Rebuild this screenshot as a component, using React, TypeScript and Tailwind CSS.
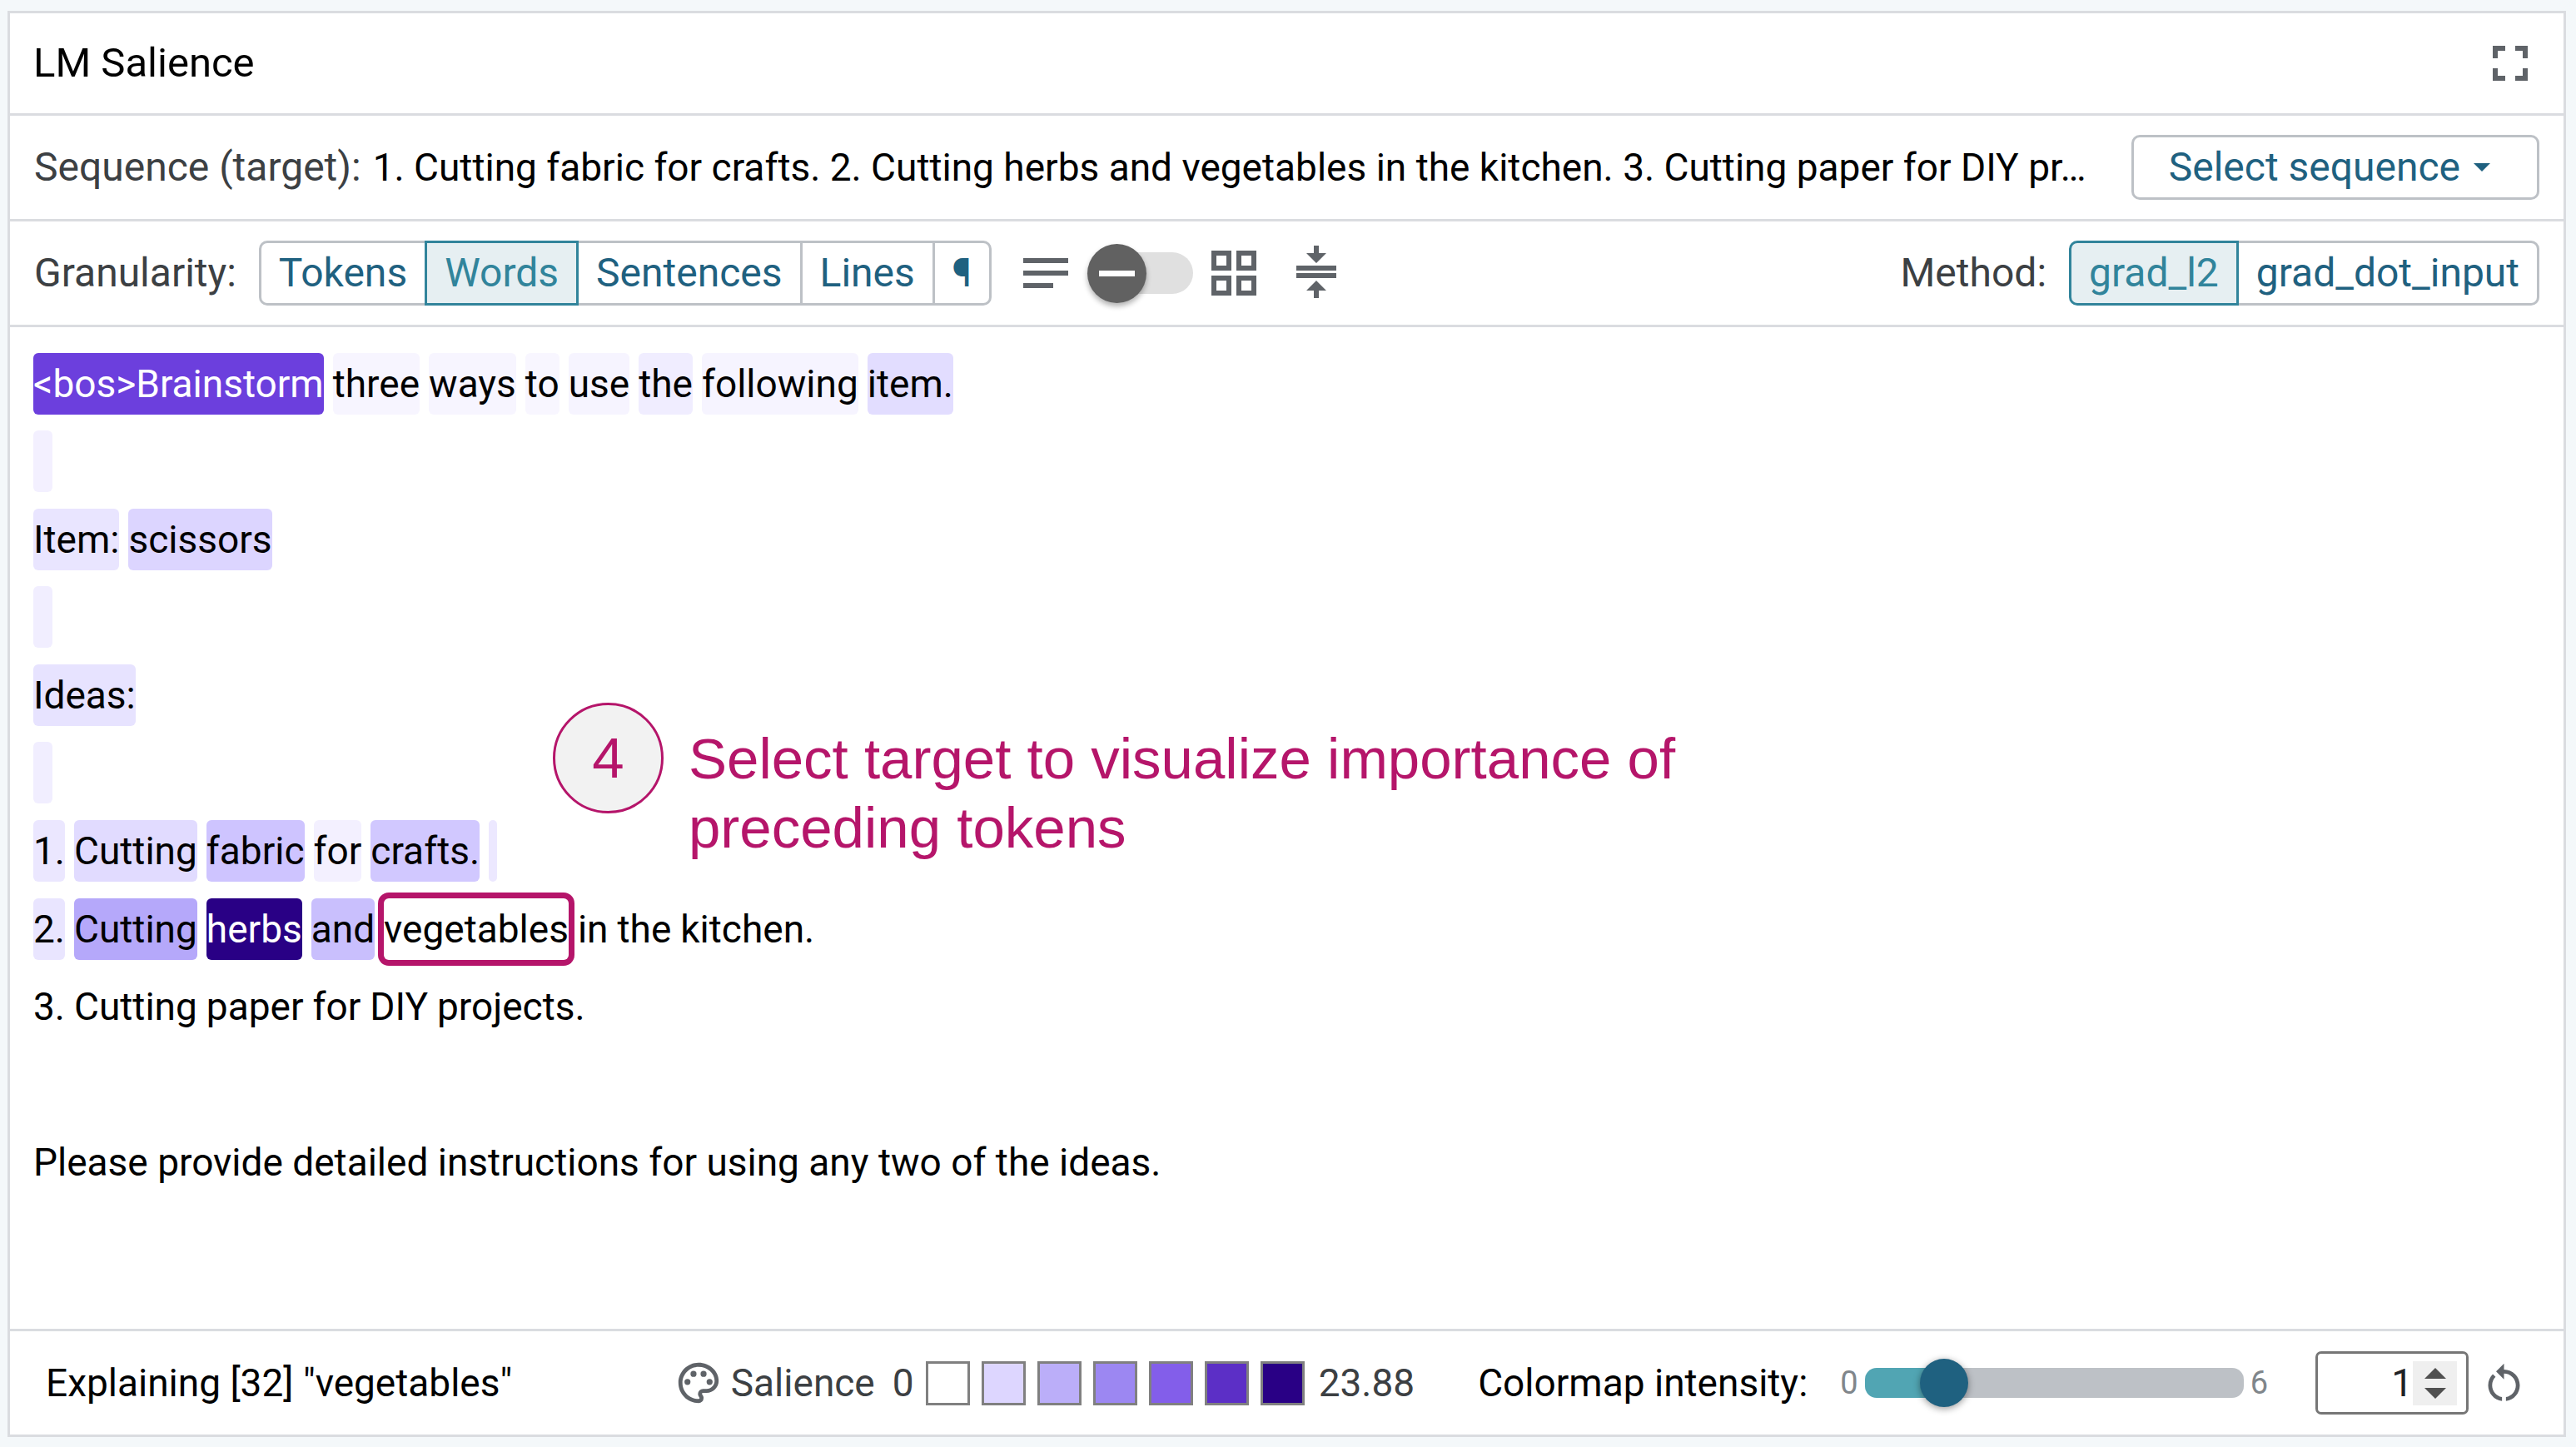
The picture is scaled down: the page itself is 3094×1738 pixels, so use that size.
import React, { useState } from "react";

type IconProps = { d: string; className: string };

function Icon({ d, className }: IconProps) {
  return (
    <svg viewBox="0 0 24 24" fill="currentColor" aria-hidden="true" className={className}>
      <path d={d} />
    </svg>
  );
}

const ICONS = {
  fullscreen: "M7 14H5v5h5v-2H7v-3zm-2-4h2V7h3V5H5v5zm12 7h-3v2h5v-5h-2v3zM14 5v2h3v3h2V5h-5z",
  notes: "M3 18h12v-2H3v2zM3 6v2h18V6H3zm0 7h18v-2H3v2z",
  grid: "M3 3v8h8V3H3zm6 6H5V5h4v4zm-6 4v8h8v-8H3zm6 6H5v-4h4v4zm4-16v8h8V3h-8zm6 6h-4V5h4v4zm-6 4v8h8v-8h-8zm6 6h-4v-4h4v4z",
  compress: "M8 19h3v3h2v-3h3l-4-4-4 4zm8-15h-3V1h-2v3H8l4 4 4-4zM4 9v2h16V9H4zM4 12h16v2H4z",
  palette:
    "M12 22C6.49 22 2 17.51 2 12S6.49 2 12 2s10 4.04 10 9c0 3.31-2.69 6-6 6h-1.77c-.28 0-.5.22-.5.5 0 .12.05.23.13.33.41.47.64 1.06.64 1.67A2.5 2.5 0 0 1 12 22zm0-18c-4.41 0-8 3.59-8 8s3.59 8 8 8c.28 0 .5-.22.5-.5a.54.54 0 0 0-.14-.35c-.41-.46-.63-1.05-.63-1.65a2.5 2.5 0 0 1 2.5-2.5H16c2.21 0 4-1.79 4-4 0-3.86-3.59-7-8-7zM6.5 10a1.5 1.5 0 1 0 0 3 1.5 1.5 0 1 0 0-3zM9.5 6a1.5 1.5 0 1 0 0 3 1.5 1.5 0 1 0 0-3zM14.5 6a1.5 1.5 0 1 0 0 3 1.5 1.5 0 1 0 0-3zM17.5 10a1.5 1.5 0 1 0 0 3 1.5 1.5 0 1 0 0-3z",
  restart:
    "M12 5V2L8 6l4 4V7c3.31 0 6 2.69 6 6 0 2.97-2.17 5.43-5 5.91v2.02c3.95-.49 7-3.85 7-7.93 0-4.42-3.58-8-8-8zm-6 8c0-1.65.67-3.15 1.76-4.24L6.34 7.34C4.9 8.79 4 10.79 4 13c0 4.08 3.05 7.44 7 7.93v-2.02c-2.83-.48-5-2.94-5-5.91z",
};

function ButtonGroup({ label, options, initial }: { label: string; options: string[]; initial: string }) {
  const [selected, setSelected] = useState(initial);
  return (
    <div className="flex items-center gap-[27px] text-[48px]">
      <span className="text-[#3c4043]">{label}</span>
      <div role="group" aria-label={label} className="flex">
        {options.map((option) => (
          <button
            key={option}
            type="button"
            aria-pressed={option === selected}
            onClick={() => setSelected(option)}
            className={
              "-ml-[3px] flex h-[78px] items-center border-[3px] px-[21px] first:ml-0 first:rounded-l-[10px] last:rounded-r-[10px] " +
              (option === selected
                ? "z-10 border-[#31849b] bg-[#e6eff2] text-[#31849b]"
                : "border-[#bdc1c6] bg-white text-[#1f6180]")
            }
          >
            {option}
          </button>
        ))}
      </div>
    </div>
  );
}

type Token = { text: string; className?: string };

const LINES: Token[][] = [
  [
    { text: "<bos>Brainstorm", className: "bg-[#6c3fdd] text-white" },
    { text: "three", className: "bg-[#f7f5ff]" },
    { text: "ways", className: "bg-[#f7f5ff]" },
    { text: "to", className: "bg-[#f8f6ff]" },
    { text: "use", className: "bg-[#f6f4ff]" },
    { text: "the", className: "bg-[#f0edff]" },
    { text: "following", className: "bg-[#f6f4ff]" },
    { text: "item.", className: "bg-[#e2ddff]" },
  ],
  [{ text: "", className: "w-[23px] bg-[#f3f0ff]" }],
  [
    { text: "Item:", className: "bg-[#e9e5ff]" },
    { text: "scissors", className: "bg-[#dcd5ff]" },
  ],
  [{ text: "", className: "w-[23px] bg-[#f1eeff]" }],
  [{ text: "Ideas:", className: "bg-[#e7e3ff]" }],
  [{ text: "", className: "w-[23px] bg-[#f1eeff]" }],
  [
    { text: "1.", className: "bg-[#ebe7ff]" },
    { text: "Cutting", className: "bg-[#e1dbff]" },
    { text: "fabric", className: "bg-[#cec4ff]" },
    { text: "for", className: "bg-[#f3f0ff]" },
    { text: "crafts.", className: "bg-[#d1c8ff]" },
    { text: "", className: "w-[10px] bg-[#ece8ff]" },
  ],
  [
    { text: "2.", className: "bg-[#e9e5ff]" },
    { text: "Cutting", className: "bg-[#b5a8fa]" },
    { text: "herbs", className: "bg-[#290085] text-white" },
    { text: "and", className: "bg-[#c9bffd]" },
    { text: "vegetables", className: "ring-[7px] ring-[#b5156a]" },
    { text: "in" },
    { text: "the" },
    { text: "kitchen." },
  ],
  [{ text: "3." }, { text: "Cutting" }, { text: "paper" }, { text: "for" }, { text: "DIY" }, { text: "projects." }],
  [],
  [{ text: "Please provide detailed instructions for using any two of the ideas." }],
];

const SWATCHES = [
  "bg-white",
  "bg-[#ddd6ff]",
  "bg-[#bbaef9]",
  "bg-[#9c87f2]",
  "bg-[#835eea]",
  "bg-[#5c2fc6]",
  "bg-[#290085]",
];

function Annotation() {
  return (
    <div className="absolute left-[652px] top-[451px] flex items-start gap-[30px] font-['Liberation_Sans',Arial,sans-serif] text-[69px] leading-[83px] text-[#b5156a]">
      <div className="flex size-[133px] shrink-0 items-center justify-center rounded-full border-[3px] border-[#b5156a] bg-[#f2f2f2]">
        4
      </div>
      <p className="pt-[26px]">
        Select target to visualize importance of
        <br />
        preceding tokens
      </p>
    </div>
  );
}

export default function App() {
  const [spread, setSpread] = useState(false);
  const [intensity, setIntensity] = useState(1);
  const fill = 4 + (intensity / 6) * 92;
  const step = (delta: number) => setIntensity((v) => Math.min(6, Math.max(0, v + delta)));

  return (
    <div className="flex min-h-screen flex-col bg-[#f4f8fa] pb-[12px] pl-[9px] pr-[12px] pt-[13px] font-[Roboto,sans-serif] text-[46px] leading-[56px] text-black">
      <main className="flex flex-1 flex-col border-[3px] border-[#dadce0] bg-white">
        <header className="flex h-[123px] items-center justify-between border-b-[3px] border-[#dadce0] pl-[28px] pr-[28px]">
          <h1 className="text-[49px]">LM Salience</h1>
          <button type="button" aria-label="Fullscreen" className="text-[#5f6368]">
            <Icon d={ICONS.fullscreen} className="size-[72px]" />
          </button>
        </header>

        <section className="flex h-[127px] items-center justify-between border-b-[3px] border-[#dadce0] px-[29px]">
          <div className="flex items-baseline gap-[14px] whitespace-nowrap">
            <span className="text-[48px] text-[#3c4043]">Sequence (target):</span>
            <span>
              1. Cutting fabric for crafts. 2. Cutting herbs and vegetables in the kitchen. 3. Cutting paper for DIY pr…
            </span>
          </div>
          <button
            type="button"
            className="flex h-[78px] shrink-0 items-center gap-[16px] rounded-[10px] border-[3px] border-[#bdc1c6] pl-[42px] pr-[56px] text-[48px] text-[#1f6180]"
          >
            Select sequence
            <svg viewBox="0 0 20 10" aria-hidden="true" className="h-[10px] w-[20px]" fill="currentColor">
              <path d="M0 0h20L10 10z" />
            </svg>
          </button>
        </section>

        <section className="flex h-[127px] items-center justify-between border-b-[3px] border-[#dadce0] px-[29px]">
          <div className="flex items-center text-[#5f6368]">
            <ButtonGroup
              label="Granularity:"
              options={["Tokens", "Words", "Sentences", "Lines", "¶"]}
              initial="Words"
            />
            <Icon d={ICONS.notes} className="ml-[29px] size-[72px]" />
            <label className="relative ml-[14px] flex h-[72px] w-[127px] cursor-pointer items-center">
              <input
                type="checkbox"
                role="switch"
                aria-label="Token spacing"
                checked={spread}
                onChange={(e) => setSpread(e.target.checked)}
                className="peer sr-only"
              />
              <span className="ml-[16px] h-[50px] flex-1 rounded-full bg-[#e0e0e0]" />
              <span className="absolute left-0 flex size-[71px] items-center justify-center rounded-full bg-[#616161] shadow-[0_4px_6px_rgba(0,0,0,0.3)] peer-checked:left-[56px]">
                <span className="h-[7px] w-[43px] bg-white" />
              </span>
            </label>
            <Icon d={ICONS.grid} className="ml-[13px] size-[72px]" />
            <button type="button" aria-label="Compress lines" className="ml-[27px]">
              <Icon d={ICONS.compress} className="size-[72px]" />
            </button>
          </div>
          <ButtonGroup label="Method:" options={["grad_l2", "grad_dot_input"]} initial="grad_l2" />
        </section>

        <section className="relative grid flex-1 auto-rows-fr px-[28px] pb-[153px] pt-[21px]">
          {LINES.map((line, i) => (
            <div key={i} className="flex items-center gap-[11px]">
              {line.map((token, j) => (
                <span
                  key={j}
                  className={"flex h-[74px] items-center whitespace-nowrap rounded-[6px] " + (token.className ?? "")}
                >
                  {token.text}
                </span>
              ))}
            </div>
          ))}
          <Annotation />
        </section>

        <footer className="flex h-[127px] items-center border-t-[3px] border-[#dadce0] px-[43px]">
          <span className="flex-1">Explaining [32] "vegetables"</span>
          <div className="mr-[76px] flex items-center text-[#3c4043]">
            <Icon d={ICONS.palette} className="size-[58px] text-[#5f6368]" />
            <span className="ml-[10px]">Salience</span>
            <span className="ml-[21px]">0</span>
            <div className="ml-[14px] mr-[17px] flex gap-[14px]">
              {SWATCHES.map((c) => (
                <span key={c} className={"size-[53px] border-[3px] border-[#808080] " + c} />
              ))}
            </div>
            <span>23.88</span>
          </div>
          <label htmlFor="intensity">Colormap intensity:</label>
          <div className="ml-[39px] flex items-center gap-[8px] text-[38px] text-[#80868b]">
            <span>0</span>
            <input
              id="intensity"
              type="range"
              min={0}
              max={6}
              step={1}
              value={intensity}
              onChange={(e) => setIntensity(Number(e.target.value))}
              style={{ backgroundImage: `linear-gradient(to right, #51a5b3 ${fill}%, #bdc1c6 ${fill}%)` }}
              className="h-[36px] w-[455px] appearance-none rounded-[14px] [&::-webkit-slider-thumb]:size-[58px] [&::-webkit-slider-thumb]:appearance-none [&::-webkit-slider-thumb]:rounded-full [&::-webkit-slider-thumb]:bg-[#1f6180] [&::-webkit-slider-thumb]:shadow-[0_2px_8px_rgba(0,0,0,0.4)]"
            />
            <span>6</span>
          </div>
          <div className="ml-[57px] flex h-[76px] w-[184px] items-center rounded-[7px] border-[3px] border-[#767676] pr-[11px]">
            <input
              type="number"
              aria-label="Colormap intensity value"
              min={0}
              max={6}
              value={intensity}
              onChange={(e) => setIntensity(Number(e.target.value))}
              className="w-full min-w-0 appearance-none bg-transparent text-right text-[#202124] outline-none [appearance:textfield] [&::-webkit-inner-spin-button]:appearance-none"
            />
            <div className="flex h-[53px] w-[53px] shrink-0 flex-col items-center justify-between bg-[#efefef] py-[8px] text-[#505050]">
              <button type="button" aria-label="Increase" onClick={() => step(1)} className="flex">
                <svg viewBox="0 0 26 13" className="h-[13px] w-[26px]" fill="currentColor">
                  <path d="M0 13h26L13 0z" />
                </svg>
              </button>
              <button type="button" aria-label="Decrease" onClick={() => step(-1)} className="flex">
                <svg viewBox="0 0 26 13" className="h-[13px] w-[26px]" fill="currentColor">
                  <path d="M0 0h26L13 13z" />
                </svg>
              </button>
            </div>
          </div>
          <button
            type="button"
            aria-label="Reset intensity"
            onClick={() => setIntensity(1)}
            className="ml-[14px] text-[#5f6368]"
          >
            <Icon d={ICONS.restart} className="size-[57px]" />
          </button>
        </footer>
      </main>
    </div>
  );
}
